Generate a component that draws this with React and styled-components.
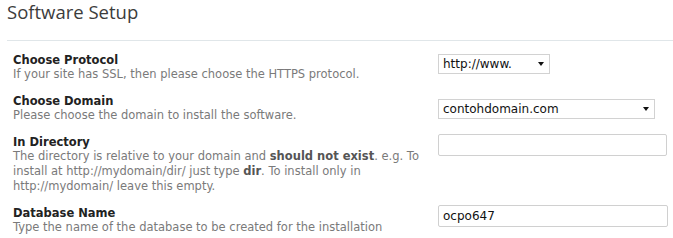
import React from 'react';
import styled, { createGlobalStyle } from 'styled-components';

const GlobalStyle = createGlobalStyle`
  html, body {
    margin: 0;
    padding: 0;
    background: #fff;
  }
  body {
    font-family: "DejaVu Sans", Verdana, sans-serif;
  }
`;

const Page = styled.div`
  width: 673px;
  height: 238px;
  overflow: hidden;
  padding-left: 7px;
  box-sizing: border-box;
`;

const Title = styled.h1`
  margin: -1px 0 0;
  height: 42px;
  font-family: "Open Sans", "DejaVu Sans", sans-serif;
  font-weight: 400;
  font-size: 18.5px;
  line-height: 25px;
  color: #3c3c3c;
  border-bottom: 1px solid #e0e6e9;
  box-sizing: border-box;
`;

const Form = styled.div`
  display: flex;
  flex-direction: column;
  gap: 12px;
  padding-top: 12px;
`;

const Row = styled.div`
  display: grid;
  grid-template-columns: 431px 1fr;
  align-items: start;
`;

const Info = styled.div`
  padding-left: 6px;
`;

const Label = styled.div`
  font-size: 11.5px;
  line-height: 14px;
  font-weight: bold;
  color: #222;
`;

const Desc = styled.div`
  font-size: 11.5px;
  line-height: 15px;
  color: #7a7a7a;
  width: 416px;

  b {
    color: #555;
  }
`;

const Field = styled.div`
  position: relative;
  width: ${p => p.$w}px;
  margin-top: ${p => p.$top || 0}px;
`;

const Select = styled.select`
  appearance: none;
  -webkit-appearance: none;
  width: 100%;
  height: 20px;
  margin: 0;
  padding: 0 0 0 4px;
  border: 1px solid #d2d2d2;
  border-radius: 0;
  background: #fff;
  font-family: "DejaVu Sans", Verdana, sans-serif;
  font-size: 12px;
  color: #111;
  box-sizing: border-box;
  outline: none;
`;

const Arrow = styled.span`
  position: absolute;
  right: 6px;
  top: 9px;
  width: 0;
  height: 0;
  border-left: 3px solid transparent;
  border-right: 3px solid transparent;
  border-top: 4px solid #111;
  pointer-events: none;
`;

const TextInput = styled.input`
  width: 100%;
  height: 22px;
  margin: 0;
  padding: 0 0 0 4px;
  border: 1px solid #d0d0d0;
  border-radius: 2px;
  background: #fff;
  font-family: "DejaVu Sans", Verdana, sans-serif;
  font-size: 12px;
  color: #111;
  box-sizing: border-box;
  outline: none;
`;

const App = () => (
  <>
    <GlobalStyle />
    <Page>
      <Title>Software Setup</Title>
      <Form>
        <Row>
          <Info>
            <Label>Choose Protocol</Label>
            <Desc>If your site has SSL, then please choose the HTTPS protocol.</Desc>
          </Info>
          <Field $w={112} $top={0}>
            <Select defaultValue="http://www.">
              <option>http://www.</option>
              <option>http://</option>
              <option>https://</option>
              <option>https://www.</option>
            </Select>
            <Arrow />
          </Field>
        </Row>
        <Row>
          <Info>
            <Label>Choose Domain</Label>
            <Desc>Please choose the domain to install the software.</Desc>
          </Info>
          <Field $w={217} $top={4}>
            <Select defaultValue="contohdomain.com">
              <option>contohdomain.com</option>
            </Select>
            <Arrow />
          </Field>
        </Row>
        <Row>
          <Info>
            <Label>In Directory</Label>
            <Desc>
              The directory is relative to your domain and <b>should not exist</b>. e.g. To
              install at http://mydomain/dir/ just type <b>dir</b>. To install only in
              http://mydomain/ leave this empty.
            </Desc>
          </Info>
          <Field $w={229} $top={-1}>
            <TextInput type="text" defaultValue="" />
          </Field>
        </Row>
        <Row>
          <Info>
            <Label>Database Name</Label>
            <Desc>Type the name of the database to be created for the installation</Desc>
          </Info>
          <Field $w={230} $top={-1}>
            <TextInput type="text" defaultValue="ocpo647" />
          </Field>
        </Row>
      </Form>
    </Page>
  </>
);

export default App;
